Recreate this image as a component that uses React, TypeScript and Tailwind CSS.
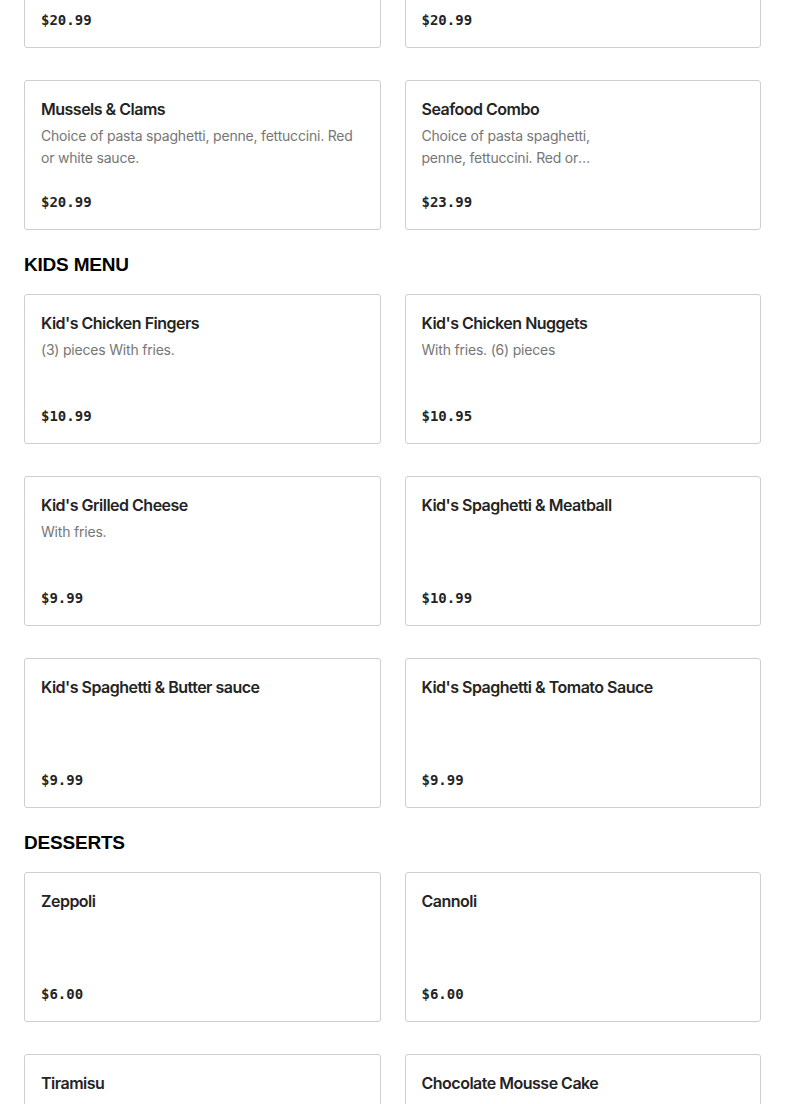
type Item = {
  name: string
  description?: string
  price: string
  narrow?: boolean
}

type Section = {
  title?: string
  items: Item[]
}

const SECTIONS: Section[] = [
  {
    items: [
      { name: 'Shrimp Scampi', description: 'Choice of pasta spaghetti, penne, fettuccini.', price: '$20.99' },
      { name: 'Shrimp Fra Diavolo', description: 'Choice of pasta spaghetti, penne, fettuccini.', price: '$20.99' },
      {
        name: 'Mussels & Clams',
        description: 'Choice of pasta spaghetti, penne, fettuccini. Red or white sauce.',
        price: '$20.99',
      },
      {
        name: 'Seafood Combo',
        description: 'Choice of pasta spaghetti, penne, fettuccini. Red or white sauce.',
        price: '$23.99',
        narrow: true,
      },
    ],
  },
  {
    title: 'Kids Menu',
    items: [
      { name: "Kid's Chicken Fingers", description: '(3) pieces With fries.', price: '$10.99' },
      { name: "Kid's Chicken Nuggets", description: 'With fries. (6) pieces', price: '$10.95' },
      { name: "Kid's Grilled Cheese", description: 'With fries.', price: '$9.99' },
      { name: "Kid's Spaghetti & Meatball", price: '$10.99' },
      { name: "Kid's Spaghetti & Butter sauce", price: '$9.99' },
      { name: "Kid's Spaghetti & Tomato Sauce", price: '$9.99' },
    ],
  },
  {
    title: 'Desserts',
    items: [
      { name: 'Zeppoli', price: '$6.00' },
      { name: 'Cannoli', price: '$6.00' },
      { name: 'Tiramisu', price: '$6.00' },
      { name: 'Chocolate Mousse Cake', price: '$6.00' },
    ],
  },
]

function MenuCard({ item }: { item: Item }) {
  return (
    <div className="flex h-[150px] flex-col rounded-[3px] border border-[#cfcfcf] bg-white px-4 pt-4 pb-[17px]">
      <div className="text-[16px] leading-[24px] font-semibold text-[#242424] font-['Inter',sans-serif] tracking-[-0.5px]">
        {item.name}
      </div>
      {item.description && (
        <p
          className={`mt-[4px] line-clamp-2 text-[14px] leading-[22px] text-[#767676] font-['Inter',sans-serif] tracking-[-0.2px] ${
            item.narrow ? 'max-w-[176px]' : ''
          }`}
        >
          {item.description}
        </p>
      )}
      <div className="mt-auto text-[14px] leading-[20px] font-bold text-[#242424] font-['DejaVu_Sans_Mono',monospace]">
        {item.price}
      </div>
    </div>
  )
}

export default function App() {
  return (
    <div className="min-h-screen overflow-hidden bg-white">
      <div className="-mt-[102px] px-6">
        {SECTIONS.map((section, i) => (
          <section key={i}>
            {section.title && (
              <h2 className="pt-[25px] pb-[19px] text-[19px] leading-[20px] font-bold uppercase text-black font-['Liberation_Sans',Arial,sans-serif] tracking-[-0.2px]">
                {section.title}
              </h2>
            )}
            <div className="grid grid-cols-2 gap-x-6 gap-y-8">
              {section.items.map((item) => (
                <MenuCard key={item.name} item={item} />
              ))}
            </div>
          </section>
        ))}
      </div>
    </div>
  )
}
